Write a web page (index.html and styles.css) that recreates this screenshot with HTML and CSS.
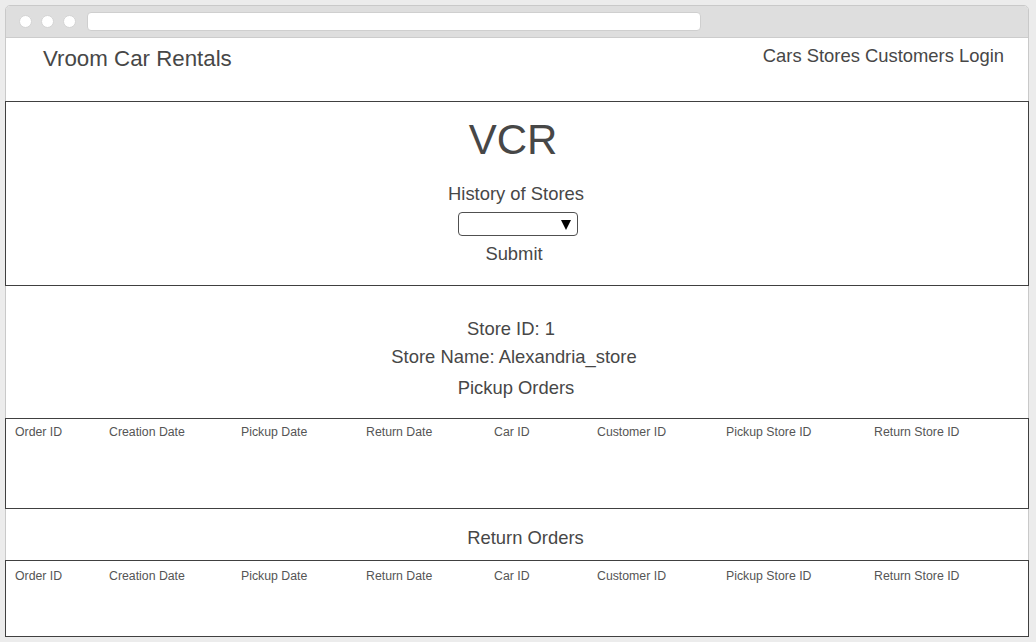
FILE: index.html
```html
<!DOCTYPE html>
<html lang="en">
<head>
<meta charset="utf-8">
<title>Vroom Car Rentals</title>
<link rel="stylesheet" href="styles.css">
</head>
<body>
<div class="window">
  <div class="titlebar">
    <span class="dot"></span><span class="dot"></span><span class="dot"></span>
    <div class="address"></div>
  </div>
  <div class="page">
    <header class="site-header">
      <div class="brand">Vroom Car Rentals</div>
      <nav class="nav">Cars Stores Customers Login</nav>
    </header>

    <section class="hero">
      <div class="logo">VCR</div>
      <div class="label history">History of Stores</div>
      <div class="select"><span class="caret"></span></div>
      <div class="label submit">Submit</div>
    </section>

    <section class="store-info">
      <div class="label store-id">Store ID: 1</div>
      <div class="label store-name">Store Name: Alexandria_store</div>
      <div class="label pickup-title">Pickup Orders</div>
    </section>

    <div class="orders orders-pickup">
      <div class="orders-head">
        <span>Order ID</span><span>Creation Date</span><span>Pickup Date</span><span>Return Date</span><span>Car ID</span><span>Customer ID</span><span>Pickup Store ID</span><span>Return Store ID</span>
      </div>
    </div>

    <div class="label return-title">Return Orders</div>

    <div class="orders orders-return">
      <div class="orders-head">
        <span>Order ID</span><span>Creation Date</span><span>Pickup Date</span><span>Return Date</span><span>Car ID</span><span>Customer ID</span><span>Pickup Store ID</span><span>Return Store ID</span>
      </div>
    </div>
  </div>
</div>
</body>
</html>
```

FILE: styles.css
```css
html, body {
  margin: 0;
  padding: 0;
}
body {
  background: #ececec;
  font-family: "Liberation Sans", Arial, sans-serif;
  color: #474747;
  width: 1036px;
  height: 642px;
  overflow: hidden;
}
.window {
  margin: 5px 0 0 5px;
  width: 1024px;
  box-sizing: border-box;
  border: 1px solid #c9c9c9;
  border-radius: 5px 5px 0 0;
  background: #fff;
}
.titlebar {
  height: 32px;
  box-sizing: border-box;
  background: #dedede;
  border-bottom: 1px solid #cccccc;
  border-radius: 4px 4px 0 0;
  display: flex;
  align-items: center;
  padding-left: 13px;
}
.dot {
  width: 13px;
  height: 13px;
  border-radius: 50%;
  background: #fff;
  margin-right: 9px;
  box-sizing: border-box;
  border: 1px solid #d4d4d4;
}
.dot:nth-child(3) {
  margin-right: 11px;
}
.address {
  width: 614px;
  height: 19px;
  box-sizing: border-box;
  background: #fff;
  border: 1px solid #cfcfcf;
  border-radius: 4px;
}
.page {
  display: flex;
  flex-direction: column;
}
.site-header {
  height: 63px;
  box-sizing: border-box;
  display: flex;
  justify-content: space-between;
  align-items: flex-start;
  padding: 7px 24px 0 37px;
}
.brand {
  font-size: 22.3px;
  line-height: 28px;
}
.nav {
  font-size: 18.4px;
  line-height: 22px;
}
.hero {
  margin: 0 -1px;
  border: 1px solid #404040;
  padding: 14px 0 20px;
  display: flex;
  flex-direction: column;
  align-items: center;
}
.logo {
  font-size: 42px;
  line-height: 48px;
  padding-right: 8px;
}
.label {
  font-size: 18.4px;
  line-height: 22px;
  text-align: center;
}
.history {
  margin-top: 19px;
  padding-right: 2px;
}
.select {
  margin-top: 7px;
  margin-left: 2px;
  width: 120px;
  height: 24px;
  box-sizing: border-box;
  border: 1px solid #505050;
  border-radius: 4px;
  display: flex;
  justify-content: flex-end;
  align-items: center;
  padding: 1px 6px 0 0;
}
.caret {
  width: 0;
  height: 0;
  border-left: 5.5px solid transparent;
  border-right: 5.5px solid transparent;
  border-top: 10px solid #000;
}
.submit {
  margin-top: 7px;
  padding-right: 6px;
}
.store-info {
  padding-top: 32px;
  display: flex;
  flex-direction: column;
  align-items: center;
}
.store-id {
  padding-right: 12px;
}
.store-name {
  margin-top: 6px;
  padding-right: 6px;
}
.pickup-title {
  margin-top: 9px;
  margin-bottom: 19px;
  padding-right: 2px;
}
.orders {
  margin: 0 -1px;
  border: 1px solid #404040;
  box-sizing: border-box;
}
.orders-pickup {
  height: 91px;
  padding-top: 6px;
}
.orders-return {
  height: 77px;
  padding-top: 8px;
  margin-bottom: -1px;
}
.orders-head {
  display: grid;
  grid-template-columns: 94px 132px 125px 128px 103px 129px 148px 1fr;
  padding-left: 9px;
  font-size: 12.3px;
  line-height: 15px;
  color: #555;
}
.return-title {
  margin-top: 18px;
  margin-bottom: 11px;
  padding-left: 17px;
}
```
